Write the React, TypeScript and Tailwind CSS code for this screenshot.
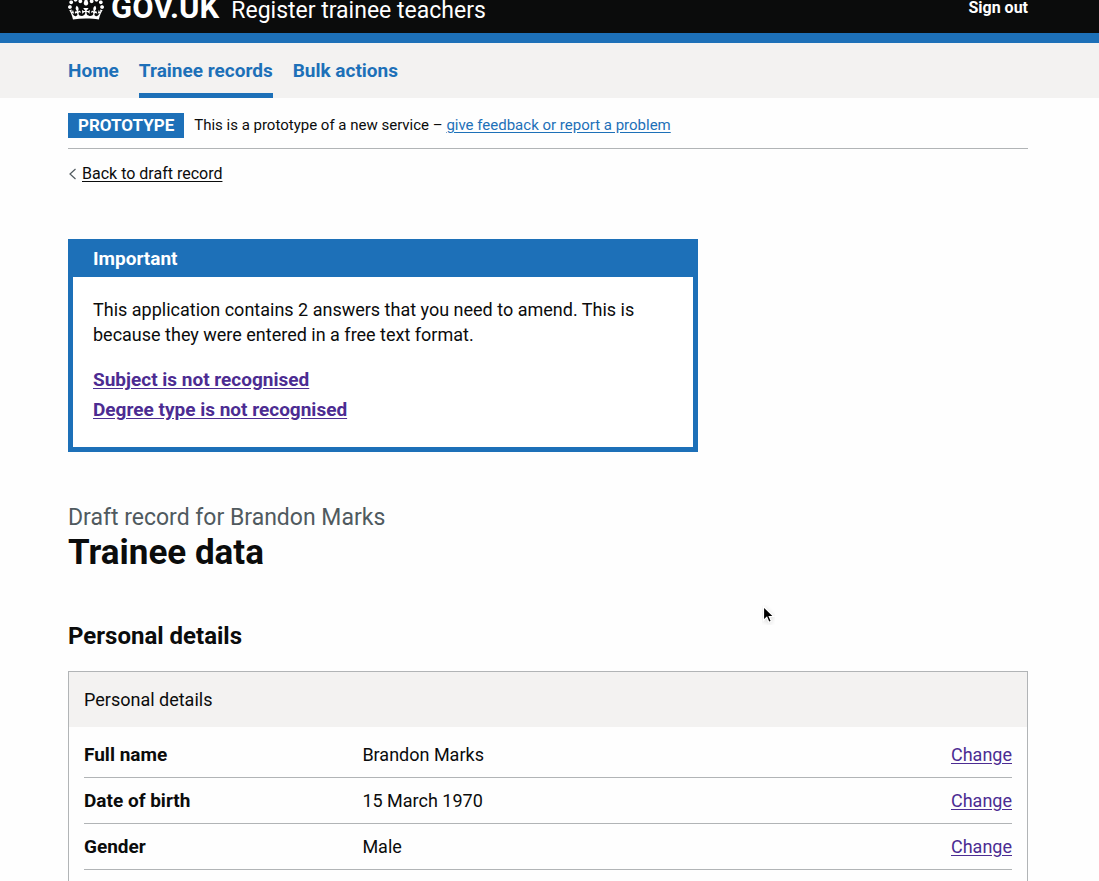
import type { ReactNode } from "react";

const navItems = [
  { label: "Home", current: false },
  { label: "Trainee records", current: true },
  { label: "Bulk actions", current: false },
];

const details = [
  { label: "Full name", value: "Brandon Marks" },
  { label: "Date of birth", value: "15 March 1970" },
  { label: "Gender", value: "Male" },
  { label: "Nationality", value: "British" },
];

function Container({ children, className = "" }: { children: ReactNode; className?: string }) {
  return (
    <div className="pr-[3px]">
      <div className={"mx-auto max-w-[960px] " + className}>{children}</div>
    </div>
  );
}

function Crown() {
  return (
    <svg viewBox="0 0 132 97" width="36" height="27" fill="currentColor" aria-hidden="true" className="shrink-0">
      <path
        fillRule="evenodd"
        d="M25 30.2c3.5 1.5 7.7-.2 9.1-3.7 1.5-3.6-.2-7.8-3.9-9.2-3.6-1.4-7.6.3-9.1 3.9-1.4 3.5.3 7.5 3.9 9zM9 39.5c3.6 1.5 7.8-.2 9.2-3.7 1.5-3.6-.2-7.8-3.9-9.1-3.6-1.5-7.6.2-9.1 3.8-1.4 3.5.3 7.5 3.8 9zM4.4 57.2c3.5 1.5 7.7-.2 9.1-3.8 1.5-3.6-.2-7.7-3.9-9.1-3.5-1.5-7.6.3-9.1 3.8-1.4 3.5.3 7.6 3.9 9.1zm38.3-21.4c3.5 1.5 7.7-.2 9.1-3.8 1.5-3.6-.2-7.7-3.9-9.1-3.6-1.5-7.6.3-9.1 3.8-1.3 3.6.4 7.7 3.9 9.1zm64.4-5.6c-3.6 1.5-7.8-.2-9.1-3.7-1.5-3.6.2-7.8 3.8-9.2 3.6-1.4 7.7.3 9.2 3.9 1.3 3.5-.4 7.5-3.9 9zm15.9 9.3c-3.6 1.5-7.7-.2-9.1-3.7-1.5-3.6.2-7.8 3.7-9.1 3.6-1.5 7.7.2 9.2 3.8 1.5 3.5-.3 7.5-3.8 9zm4.7 17.7c-3.6 1.5-7.8-.2-9.2-3.8-1.5-3.6.2-7.7 3.9-9.1 3.6-1.5 7.7.3 9.2 3.8 1.3 3.5-.4 7.6-3.9 9.1zM89.3 35.8c-3.6 1.5-7.8-.2-9.2-3.8-1.4-3.6.2-7.7 3.9-9.1 3.6-1.5 7.7.3 9.2 3.8 1.4 3.6-.3 7.7-3.9 9.1zM69.7 17.7l8.9 4.7V9.3l-8.9 2.8c-.2-.3-.5-.6-.9-.9L72.4 0H59.6l3.5 11.2c-.3.3-.6.5-.9.9l-8.8-2.8v13.1l8.8-4.7c.3.3.6.7.9.9l-5 15.4v.1c-.2.8-.4 1.6-.4 2.4 0 4.1 3.1 7.5 7 8.1h.2c.3 0 .7.1 1 .1.4 0 .7 0 1-.1h.2c4-.6 7.1-4.1 7.1-8.1 0-.8-.1-1.7-.4-2.4V34l-5.1-15.4c.4-.2.7-.6 1-.9zM66 92.8c16.9 0 32.8 1.1 47.1 3.2 4-16.9 8.9-26.7 14-33.5l-9.6-3.4c1 4.9 1.1 7.2 0 10.2-1.5-1.4-3-4.3-4.2-8.7L108.6 76c2.8-2 5-3.2 7.5-3.3-4.4 9.4-10 11.9-13.6 11.2-4.3-.8-6.3-4.6-5.6-7.9 1-4.7 5.7-5.9 8-.5 4.3-8.7-3-11.4-7.6-8.8 7.1-7.2 7.9-13.5 2.1-21.1-8 6.1-8.1 12.3-4.5 20.8-4.7-5.4-12.1-2.5-9.5 6.2 3.4-5.2 7.9-2 7.2 3.1-.6 4.3-6.4 7.8-13.5 7.2-10.3-.9-10.9-8-11.2-13.8 2.5-.5 7.1 1.8 11 7.3L80.2 60c-4.1 4.4-8 5.3-12.3 5.4 1.4-4.4 8-11.6 8-11.6H55.5s6.4 7.2 7.9 11.6c-4.2-.1-8-1-12.3-5.4l1.4 16.4c3.9-5.5 8.5-7.7 10.9-7.3-.3 5.8-.9 12.8-11.1 13.8-7.2.6-12.9-2.9-13.5-7.2-.7-5 3.8-8.3 7.1-3.1 2.7-8.7-4.6-11.6-9.4-6.2 3.7-8.5 3.6-14.7-4.6-20.8-5.8 7.6-5 13.9 2.2 21.1-4.7-2.6-11.9.1-7.7 8.8 2.3-5.5 7.1-4.2 8.1.5.7 3.3-1.3 7.1-5.7 7.9-3.5.7-9-1.8-13.5-11.2 2.5.1 4.7 1.3 7.5 3.3l-4.7-15.4c-1.2 4.4-2.7 7.2-4.3 8.7-1.1-3-.9-5.3 0-10.2l-9.5 3.4c5 6.9 9.9 16.7 14 33.5 14.8-2.1 30.8-3.2 47.7-3.2z"
      />
    </svg>
  );
}

export default function App() {
  return (
    <div className="relative h-screen overflow-hidden bg-[#fefefe] font-[Roboto,sans-serif] text-lg leading-[25px] text-[#0b0c0c]">
      <header>
        <div className="h-[33px] bg-[#0b0c0c] text-white">
          <Container className="flex h-5 items-end justify-between">
            <div className="flex items-end">
              <a href="#govuk" className="flex items-end gap-[7px] text-[31px] leading-[24px] font-bold">
                <Crown />
                GOV.UK
              </a>
              <a href="#service" className="ml-3 text-[23px] leading-[18px]">
                Register trainee teachers
              </a>
            </div>
            <a href="#sign-out" className="text-base leading-[25px] font-bold">
              Sign out
            </a>
          </Container>
        </div>
        <div className="h-[10px] bg-[#1d70b8]" />
        <nav aria-label="Primary" className="bg-[#f3f2f1]">
          <Container>
            <ul className="flex gap-5 text-[19px] font-bold text-[#1d70b8]">
              {navItems.map((item) => (
                <li key={item.label}>
                  <a
                    href="#nav"
                    aria-current={item.current ? "page" : undefined}
                    className={
                      item.current
                        ? "block border-b-[5px] border-[#1d70b8] pt-[15px] pb-[10px]"
                        : "block pt-[15px] pb-[15px]"
                    }
                  >
                    {item.label}
                  </a>
                </li>
              ))}
            </ul>
          </Container>
        </nav>
      </header>

      <Container>
        <div className="flex items-center gap-[10px] border-b border-[#b1b4b6] pt-[15px] pb-[10px]">
          <strong className="bg-[#1d70b8] px-[10px] text-[17px] font-bold text-white">PROTOTYPE</strong>
          <p className="text-[15px]">
            This is a prototype of a new service –{" "}
            <a href="#feedback" className="text-[#1d70b8] underline underline-offset-2">
              give feedback or report a problem
            </a>
          </p>
        </div>

        <a href="#back" className="mt-3 inline-flex items-center gap-[5px] text-base leading-[25px]">
          <svg width="9" height="12" viewBox="0 0 9 12" fill="none" stroke="#505a5f" strokeWidth="1.2" aria-hidden="true">
            <path d="M7.5 1 2 6l5.500 5" />
          </svg>
          <span className="underline underline-offset-2">Back to draft record</span>
        </a>

        <main className="pt-[53px]">
          <section aria-labelledby="notice" className="max-w-[630px] border-[5px] border-[#1d70b8] bg-white">
            <h2 id="notice" className="bg-[#1d70b8] px-5 pt-[2px] pb-[6px] text-[19px] font-bold text-white">
              Important
            </h2>
            <div className="px-5 pt-5 pb-[22px]">
              <p>
                This application contains 2 answers that you need to amend. This is because they were entered in a free
                text format.
              </p>
              <ul className="mt-[18px] text-[19px] leading-[30px] font-bold text-[#4c2c92]">
                <li>
                  <a href="#subject" className="underline underline-offset-2">
                    Subject is not recognised
                  </a>
                </li>
                <li>
                  <a href="#degree" className="underline underline-offset-2">
                    Degree type is not recognised
                  </a>
                </li>
              </ul>
            </div>
          </section>

          <h1 className="mt-[51px]">
            <span className="block text-[23px] leading-[30px] text-[#505a5f]">Draft record for Brandon Marks</span>
            <span className="block text-[35px] leading-[40px] font-bold">Trainee data</span>
          </h1>

          <h2 className="mt-12 text-2xl leading-[30px] font-bold">Personal details</h2>

          <section className="mt-5 border border-[#b1b4b6]">
            <h3 className="bg-[#f3f2f1] px-[15px] py-[15px]">Personal details</h3>
            <dl className="px-[15px] py-[5px]">
              {details.map((row) => (
                <div key={row.label} className="flex border-b border-[#b1b4b6] py-[10px]">
                  <dt className="w-[30%] text-[19px] font-bold">{row.label}</dt>
                  <dd className="flex-1">{row.value}</dd>
                  <dd>
                    <a href="#change" className="text-[#4c2c92] underline underline-offset-2">
                      Change
                    </a>
                  </dd>
                </div>
              ))}
            </dl>
          </section>
        </main>
      </Container>

      <svg className="absolute top-[605px] left-[762px]" width="13" height="20" viewBox="0 0 13 20" aria-hidden="true">
        <path
          d="M1.500 1.500v14l3.300-3.100 2.100 5 2.500-1.100-2.100-4.800h4.500z"
          fill="#000"
          stroke="#fff"
          strokeWidth="1.200"
          className="drop-shadow-sm"
        />
      </svg>
    </div>
  );
}
